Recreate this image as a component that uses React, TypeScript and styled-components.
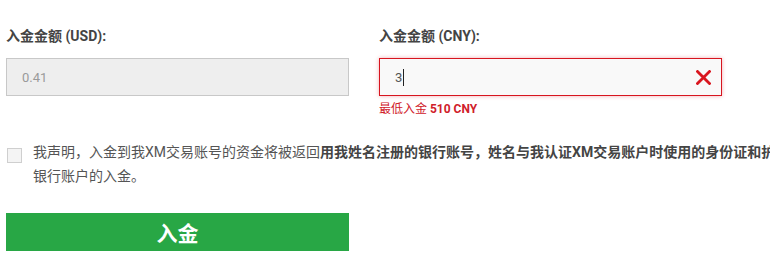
import React from "react";
import styled, { createGlobalStyle } from "styled-components";

const GlobalStyle = createGlobalStyle`
  html, body {
    margin: 0;
    padding: 0;
    background: #fff;
    overflow: hidden;
  }
  body {
    font-family: Roboto, "Noto Sans CJK SC", sans-serif;
    color: #333;
  }
`;

const Viewport = styled.div`
  width: 100vw;
  overflow: hidden;
`;

const Page = styled.div`
  width: 933px;
  padding: 27px 0 0 6px;
`;

const FieldRow = styled.div`
  display: grid;
  grid-template-columns: 343px 343px;
  column-gap: 30px;
`;

const Field = styled.div`
  display: flex;
  flex-direction: column;
`;

const Label = styled.label`
  font-size: 14px;
  font-weight: 700;
  line-height: 18px;
  color: #444;
  margin-bottom: 13px;
`;

const InputBox = styled.div<{ $error?: boolean; $disabled?: boolean }>`
  position: relative;
  height: 38px;
  box-sizing: border-box;
  border: 1px solid ${(p) => (p.$error ? "#d7151f" : "#c8c8c8")};
  background: ${(p) => (p.$disabled ? "#eeeeee" : "#f9f9f9")};
  box-shadow: ${(p) => (p.$error ? "0 0 4px rgba(215, 21, 31, 0.35)" : "none")};
  display: flex;
  align-items: center;
  padding: 0 10px 0 15px;
`;

const Value = styled.span<{ $muted?: boolean }>`
  flex: 1;
  font-size: 13px;
  color: ${(p) => (p.$muted ? "#9a9a9a" : "#555")};
  display: flex;
  align-items: center;
`;

const Caret = styled.span`
  display: inline-block;
  width: 1px;
  height: 17px;
  background: #222;
  margin-left: 1px;
`;

const ClearIcon = styled.svg`
  width: 15px;
  height: 15px;
`;

const ErrorText = styled.div`
  margin-top: 5px;
  font-size: 12px;
  line-height: 16px;
  color: #d0202a;

  b {
    font-weight: 700;
  }
`;

const Declaration = styled.div`
  display: flex;
  align-items: flex-start;
  margin-top: 26px;
  gap: 11px;
`;

const Checkbox = styled.span`
  flex: none;
  width: 15px;
  height: 15px;
  margin-top: 5px;
  margin-left: 1px;
  box-sizing: border-box;
  border: 1px solid #cfcfcf;
  background: #f4f4f4;
`;

const DeclText = styled.p`
  margin: -3px 0 0;
  font-size: 14px;
  line-height: 24px;
  color: #555;

  strong {
    font-weight: 700;
    color: #444;
  }
`;

const SubmitButton = styled.button`
  display: block;
  width: 343px;
  height: 38px;
  margin-top: 25px;
  border: none;
  background: #28a745;
  color: #fff;
  font-family: Roboto, "Noto Sans CJK SC", sans-serif;
  font-size: 21px;
  font-weight: 700;
  cursor: pointer;
`;

export default function App() {
  return (
    <>
      <GlobalStyle />
      <Viewport>
        <Page>
          <FieldRow>
            <Field>
              <Label>入金金额 (USD):</Label>
              <InputBox $disabled>
                <Value $muted>0.41</Value>
              </InputBox>
            </Field>
            <Field>
              <Label>入金金额 (CNY):</Label>
              <InputBox $error>
                <Value>
                  3<Caret />
                </Value>
                <ClearIcon viewBox="0 0 15 15">
                  <path
                    d="M1.5 1.5 L13.5 13.5 M13.5 1.5 L1.5 13.5"
                    stroke="#d9161f"
                    strokeWidth="2.8"
                    strokeLinecap="square"
                    fill="none"
                  />
                </ClearIcon>
              </InputBox>
              <ErrorText>
                最低入金 <b>510 CNY</b>
              </ErrorText>
            </Field>
          </FieldRow>

          <Declaration>
            <Checkbox />
            <DeclText>
              我声明，入金到我XM交易账号的资金将被返回
              <strong>用我姓名注册的银行账号，姓名与我认证XM交易账户时使用的身份证和护照</strong>
              一致。XM不接受第三方银行账户的入金。
            </DeclText>
          </Declaration>

          <SubmitButton>入金</SubmitButton>
        </Page>
      </Viewport>
    </>
  );
}
